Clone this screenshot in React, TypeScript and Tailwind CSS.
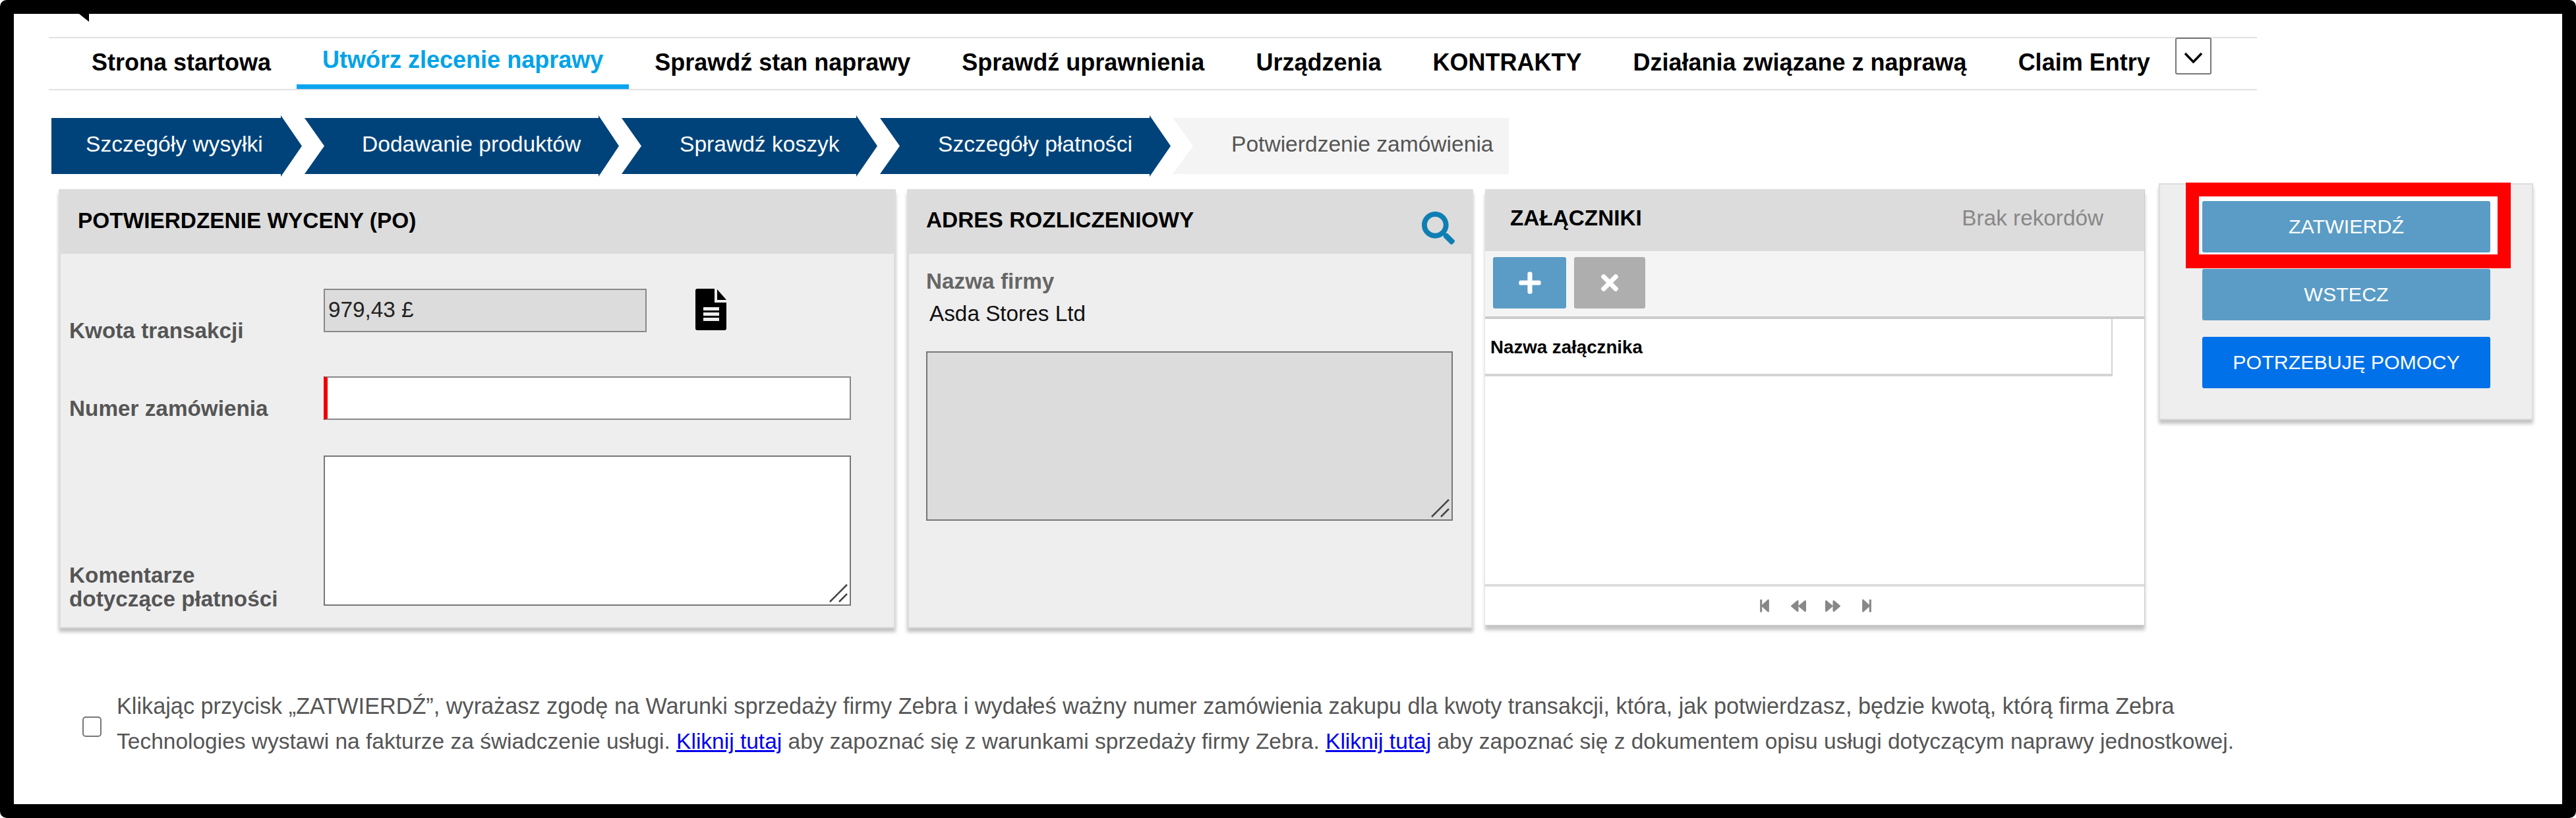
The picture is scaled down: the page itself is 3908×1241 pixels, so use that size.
import { FaBackward, FaForward, FaPlus, FaSearch, FaStepBackward, FaStepForward, FaTimes } from "react-icons/fa";

const navItems = [
  "Strona startowa",
  "Utwórz zlecenie naprawy",
  "Sprawdź stan naprawy",
  "Sprawdź uprawnienia",
  "Urządzenia",
  "KONTRAKTY",
  "Działania związane z naprawą",
  "Claim Entry",
];

function Steps() {
  return (
    <div className="mt-[38px] ml-[57px] flex h-[93px] items-center text-[33.6px] text-white">
      <div className="flex h-[93px] w-[380px] items-center bg-[#00437a] pb-[4px] pl-[52px] [clip-path:polygon(0_4px,348px_4px,348px_0,100%_50%,348px_100%,348px_calc(100%-4px),0_calc(100%-4px))]">
        Szczegóły wysyłki
      </div>
      <div className="ml-[4px] flex h-[93px] w-[477px] items-center bg-[#00437a] pb-[4px] pl-[87px] [clip-path:polygon(0_4px,446px_4px,446px_0,100%_50%,446px_100%,446px_calc(100%-4px),0_calc(100%-4px),30px_50%)]">
        Dodawanie produktów
      </div>
      <div className="ml-[4px] flex h-[93px] w-[388px] items-center bg-[#00437a] pb-[4px] pl-[88px] [clip-path:polygon(0_4px,356px_4px,356px_0,100%_50%,356px_100%,356px_calc(100%-4px),0_calc(100%-4px),30px_50%)]">
        Sprawdź koszyk
      </div>
      <div className="ml-[4px] flex h-[93px] w-[441px] items-center bg-[#00437a] pb-[4px] pl-[88px] [clip-path:polygon(0_4px,409px_4px,409px_0,100%_50%,409px_100%,409px_calc(100%-4px),0_calc(100%-4px),30px_50%)]">
        Szczegóły płatności
      </div>
      <div className="ml-[3px] flex h-[93px] w-[510px] items-center bg-[#f4f4f4] pb-[4px] pl-[89px] text-[#555555] [clip-path:polygon(0_4px,100%_4px,100%_calc(100%-4px),0_calc(100%-4px),31px_50%)]">
        Potwierdzenie zamówienia
      </div>
    </div>
  );
}

function Grip() {
  return (
    <svg className="absolute right-[3px] bottom-[3px]" width="28" height="28" viewBox="0 0 28 28" fill="none" stroke="#444444" strokeWidth="2.5">
      <path d="M1 27 L27 1" />
      <path d="M15 27 L27 15" />
    </svg>
  );
}

function DocIcon() {
  return (
    <svg className="ml-[74px] self-start" width="47" height="63" viewBox="0 0 47 63">
      <path d="M3 0 H29 V21 H47 V60 Q47 63 44 63 H3 Q0 63 0 60 V3 Q0 0 3 0 Z" fill="#000000" />
      <path d="M33 1 L47 17 H33 Z" fill="#000000" />
      <rect x="12" y="28" width="24" height="5" fill="#eeeeee" />
      <rect x="12" y="36" width="24" height="5" fill="#eeeeee" />
      <rect x="12" y="44" width="24" height="5" fill="#eeeeee" />
    </svg>
  );
}

function PurchaseOrderPanel() {
  return (
    <div className="mt-[9px] flex h-[666px] w-[1270px] flex-col border-x-[3px] border-b-[2px] border-[#dddddd] bg-[#eeeeee] shadow-[0_6px_5px_#c4c4c4]">
      <div className="flex h-[98px] shrink-0 items-center bg-[#dcdcdc] pb-[2px] pl-[26px] text-[33.4px] font-bold text-black">
        POTWIERDZENIE WYCENY (PO)
      </div>
      <div className="flex flex-col pl-[13px]">
        <div className="mt-[53px] flex h-[82px] items-end">
          <div className="w-[386px] text-[33.3px] leading-[36px] font-bold text-[#555555]">Kwota transakcji</div>
          <div className="mb-[16px] flex h-[66px] w-[490px] self-start border-2 border-[#888888] bg-[#dcdcdc] pl-[5px] text-[33.3px] leading-[60px] text-[#222222]">
            979,43 £
          </div>
          <DocIcon />
        </div>
        <div className="mt-[51px] flex h-[66px] items-start">
          <div className="mt-[31px] w-[386px] text-[33.3px] leading-[36px] font-bold text-[#555555]">Numer zamówienia</div>
          <div className="h-[66px] w-[800px] border-2 border-l-[6px] border-[#888888] border-l-[#ee0000] bg-white" />
        </div>
        <div className="mt-[54px] flex h-[236px] items-end">
          <div className="w-[386px] text-[33.3px] leading-[36px] font-bold text-[#555555]">
            Komentarze
            <br />
            dotyczące płatności
          </div>
          <div className="relative mb-[8px] h-[228px] w-[800px] border-2 border-[#777777] bg-white">
            <Grip />
          </div>
        </div>
      </div>
    </div>
  );
}

function BillingPanel() {
  return (
    <div className="mt-[9px] ml-[17px] flex h-[666px] w-[859px] flex-col border-x-[3px] border-b-[2px] border-[#dddddd] bg-[#eeeeee] shadow-[0_6px_5px_#c4c4c4]">
      <div className="flex h-[98px] shrink-0 items-center justify-between bg-[#dcdcdc] pr-[25px] pl-[26px] text-[33.4px] font-bold text-black">
        <span className="mb-[3px]">ADRES ROZLICZENIOWY</span>
        <FaSearch className="mt-[20px] text-[#0f7fb3]" size={50} />
      </div>
      <div className="flex flex-col pl-[26px]">
        <div className="mt-[22px] text-[33.3px] leading-[40px] font-bold text-[#666666]">Nazwa firmy</div>
        <div className="mt-[9px] ml-[5px] text-[33.3px] leading-[40px] text-[#111111]">Asda Stores Ltd</div>
        <div className="relative mt-[37px] h-[257px] w-[799px] border-2 border-[#777777] bg-[#dcdcdc]">
          <Grip />
        </div>
      </div>
    </div>
  );
}

function AttachmentsPanel() {
  return (
    <div className="mt-[9px] ml-[18px] flex h-[662px] w-[1001px] flex-col border-r border-b border-[#cccccc] bg-white shadow-[0_7px_5px_#c4c4c4]">
      <div className="flex h-[94px] shrink-0 items-center justify-between bg-[#dcdcdc] pr-[62px] pb-[6px] pl-[38px] text-[33.3px] text-[#888888]">
        <span className="font-bold text-black">ZAŁĄCZNIKI</span>
        Brak rekordów
      </div>
      <div className="flex h-[103px] shrink-0 gap-[12px] border-b-[4px] border-[#cccccc] bg-[#f4f4f4] pt-[9px] pl-[12px]">
        <div className="flex h-[78px] w-[111px] items-center justify-center rounded-[3px] bg-[#5a9cc6] text-white">
          <FaPlus size={38} />
        </div>
        <div className="flex h-[78px] w-[108px] items-center justify-center rounded-[3px] bg-[#aeaeae] text-white">
          <FaTimes size={38} />
        </div>
      </div>
      <div className="flex h-[87px] w-[952px] shrink-0 items-center border-r-2 border-b-[4px] border-[#d4d4d4] pt-[3px] pl-[8px] text-[27.7px] font-bold text-black">
        Nazwa załącznika
      </div>
      <div className="flex-1" />
      <div className="flex h-[62px] shrink-0 items-center justify-center gap-[29px] border-t-[4px] border-[#dddddd] pl-[3px] text-[#888888]">
        <FaStepBackward size={22} />
        <FaBackward size={23} />
        <FaForward size={23} />
        <FaStepForward size={22} />
      </div>
    </div>
  );
}

function ActionsPanel() {
  return (
    <div className="relative ml-[21px] flex h-[359px] w-[568px] flex-col items-start border-2 border-[#dddddd] bg-[#eeeeee] pt-[25px] pl-[64px] shadow-[0_6px_5px_#c4c4c4]">
      <div className="absolute top-[-3px] left-[39px] h-[130px] w-[493px] border-x-[20px] border-y-[21px] border-[#ff0000] bg-white" />
      <div className="relative flex h-[78px] w-[437px] items-center justify-center rounded-[3px] bg-[#5a9cc6] text-[30.4px] text-white">
        ZATWIERDŹ
      </div>
      <div className="relative mt-[25px] flex h-[78px] w-[437px] items-center justify-center rounded-[3px] bg-[#5a9cc6] text-[30.4px] text-white">
        WSTECZ
      </div>
      <div className="mt-[25px] flex h-[78px] w-[437px] items-center justify-center rounded-[3px] bg-[#0071e8] text-[30.4px] text-white">
        POTRZEBUJĘ POMOCY
      </div>
    </div>
  );
}

export default function App() {
  return (
    <div className="h-[1241px] w-[3908px] overflow-hidden font-['Liberation_Sans',Arial,sans-serif]">
      <div className="relative h-full w-full rounded-[10px] border-[21px] border-black bg-white">
        <svg className="absolute top-0 left-[99px]" width="15" height="12" viewBox="0 0 15 12">
          <path d="M0 0 H15 V12 Z" fill="#000000" />
        </svg>

        <div className="mt-[35px] ml-[53px] flex h-[81px] w-[3350px] items-stretch border-y-2 border-[#e2e2e2] pl-[26px] text-[36px] font-bold text-black">
          {navItems.map((item, i) => (
            <div
              key={item}
              className={
                i === 1
                  ? "flex items-center border-b-[7px] border-[#0aa5f0] px-[39px] pb-[4px] text-[#00a3e8]"
                  : "flex items-center px-[39px] pb-[4px]"
              }
            >
              {item}
            </div>
          ))}
          <div className="-mt-[1px] -ml-[1px] flex h-[56px] w-[55px] justify-center rounded-[3px] border-2 border-[#777777] pt-[20px]">
            <svg width="29" height="17" viewBox="0 0 29 17" fill="none" stroke="#000000" strokeWidth="3.5">
              <path d="M2 2 L14.5 15 L27 2" />
            </svg>
          </div>
        </div>

        <Steps />

        <div className="mt-[10px] ml-[68px] flex items-start">
          <PurchaseOrderPanel />
          <BillingPanel />
          <AttachmentsPanel />
          <ActionsPanel />
        </div>

        <div className="absolute top-[1023px] left-[104px] flex items-center">
          <div className="mt-[9px] h-[31px] w-[29px] rounded-[5px] border-2 border-[#777777] bg-white" />
          <div className="ml-[23px] w-[3400px] leading-[54px] text-[#555555]">
            <p className="text-[34.25px]">
              Klikając przycisk „ZATWIERDŹ”, wyrażasz zgodę na Warunki sprzedaży firmy Zebra i wydałeś ważny numer zamówienia zakupu dla kwoty transakcji, która, jak potwierdzasz, będzie kwotą, którą firma Zebra
            </p>
            <p className="text-[33.5px]">
              Technologies wystawi na fakturze za świadczenie usługi. <span className="text-[#0000ee] underline">Kliknij tutaj</span> aby zapoznać się z warunkami sprzedaży firmy Zebra. <span className="text-[#0000ee] underline">Kliknij tutaj</span> aby zapoznać się z dokumentem opisu usługi dotyczącym naprawy jednostkowej.
            </p>
          </div>
        </div>
      </div>
    </div>
  );
}
